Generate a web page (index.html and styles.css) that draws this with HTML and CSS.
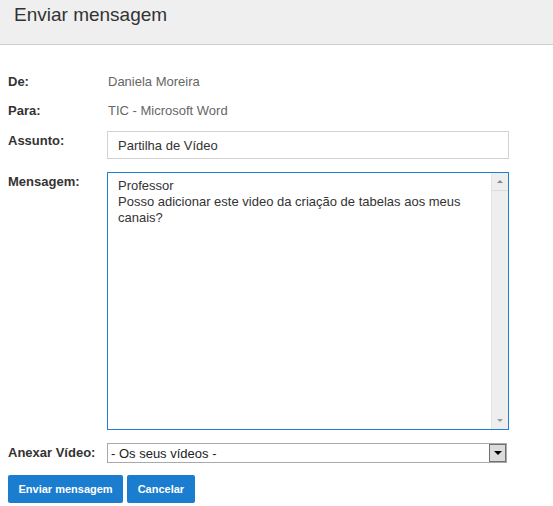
FILE: index.html
```html
<!DOCTYPE html>
<html lang="pt">
<head>
  <meta charset="UTF-8">
  <title>Enviar mensagem</title>
  <link rel="stylesheet" href="styles.css">
</head>
<body>
  <div class="header">
    <h1>Enviar mensagem</h1>
  </div>

  <form class="message-form" onsubmit="event.preventDefault();">
    <div class="row">
      <span class="label">De:</span>
      <span class="value">Daniela Moreira</span>
    </div>

    <div class="row row-last-info">
      <span class="label">Para:</span>
      <span class="value">TIC - Microsoft Word</span>
    </div>

    <div class="row">
      <label class="label label-top" for="subject">Assunto:</label>
      <input type="text" id="subject" class="text-input" value="Partilha de Vídeo">
    </div>

    <div class="row">
      <label class="label label-top2" for="message">Mensagem:</label>
      <div class="textarea-box">
        <textarea id="message">Professor
Posso adicionar este video da criação de tabelas aos meus canais?</textarea>
        <div class="scrollbar">
          <span class="arrow arrow-up"></span>
          <span class="scroll-track"></span>
          <span class="arrow arrow-down"></span>
        </div>
      </div>
    </div>

    <div class="row row-center row-attach">
      <label class="label" for="video">Anexar Vídeo:</label>
      <div class="select-box">
        <select id="video">
          <option>- Os seus vídeos -</option>
        </select>
        <span class="select-btn"><span class="tri"></span></span>
      </div>
    </div>

    <div class="buttons">
      <button type="submit" class="btn">Enviar mensagem</button>
      <button type="button" class="btn">Cancelar</button>
    </div>
  </form>
</body>
</html>
```

FILE: styles.css
```css
body {
  margin: 0;
  font-family: "Liberation Sans", Arial, sans-serif;
  font-size: 13px;
  color: #333;
  background: #fff;
}
.header {
  background-color: #efefef;
  border-bottom: 1px solid #cdcdcd;
  height: 45px;
  box-sizing: border-box;
  padding: 4px 14px 0;
}
h1 {
  margin: 0;
  font-size: 19px;
  font-weight: normal;
  color: #333;
  line-height: 22px;
}
.message-form {
  padding: 29px 8px 0;
}
.row {
  display: flex;
  align-items: flex-start;
  margin-bottom: 13px;
  line-height: 16px;
}
.row-last-info {
  margin-bottom: 12px;
}
.row-attach {
  margin-bottom: 12px;
}
.row-center {
  align-items: center;
}
.label {
  width: 99px;
  flex: none;
  font-weight: bold;
  color: #333;
}
.label-top {
  padding-top: 2px;
}
.label-top2 {
  padding-top: 2px;
}
.value {
  color: #666;
  padding-left: 1px;
}
.text-input {
  width: 402px;
  height: 28px;
  box-sizing: border-box;
  border: 1px solid #d2d2d2;
  padding: 0 10px;
  font-family: inherit;
  font-size: 13px;
  color: #333;
  outline: none;
  margin: 0;
}
.textarea-box {
  display: flex;
  width: 402px;
  height: 258px;
  box-sizing: border-box;
  border: 1px solid #1f7ed0;
}
.textarea-box textarea {
  flex: 1;
  border: none;
  outline: none;
  resize: none;
  overflow: hidden;
  padding: 5px 10px;
  margin: 0;
  font-family: inherit;
  font-size: 13px;
  line-height: 16px;
  color: #333;
}
.scrollbar {
  width: 16px;
  background: #eeeeee;
  border-left: 1px solid #e4e4e4;
  display: flex;
  flex-direction: column;
}
.arrow {
  height: 17px;
  position: relative;
  display: block;
}
.arrow-up {
  border-bottom: 1px solid #dcdcdc;
}
.arrow-up::after,
.arrow-down::after {
  content: "";
  position: absolute;
  left: 5px;
  border-left: 3px solid transparent;
  border-right: 3px solid transparent;
}
.arrow-up::after {
  top: 7px;
  border-bottom: 3px solid #888;
}
.arrow-down::after {
  top: 7px;
  border-top: 3px solid #999;
}
.scroll-track {
  flex: 1;
}
.select-box {
  display: flex;
  width: 400px;
  height: 20px;
  box-sizing: border-box;
  border: 1px solid #a9a9a9;
}
.select-box select {
  flex: 1;
  -webkit-appearance: none;
  appearance: none;
  border: none;
  outline: none;
  background: #fff;
  font-family: inherit;
  font-size: 13px;
  color: #222;
  padding: 0 3px;
  margin: 0;
  height: 18px;
}
.select-btn {
  width: 17px;
  height: 18px;
  box-sizing: border-box;
  border: 1px solid #707070;
  background: #dcdcdc;
  position: relative;
}
.tri {
  position: absolute;
  left: 4px;
  top: 6px;
  border-left: 4px solid transparent;
  border-right: 4px solid transparent;
  border-top: 4px solid #000;
}
.buttons {
  display: flex;
  gap: 4px;
}
.btn {
  background-color: #1b7dcf;
  color: #fff;
  border: none;
  border-radius: 2px;
  height: 28px;
  padding: 0 10.5px;
  font-family: inherit;
  font-size: 11px;
  font-weight: bold;
  cursor: pointer;
}
```
